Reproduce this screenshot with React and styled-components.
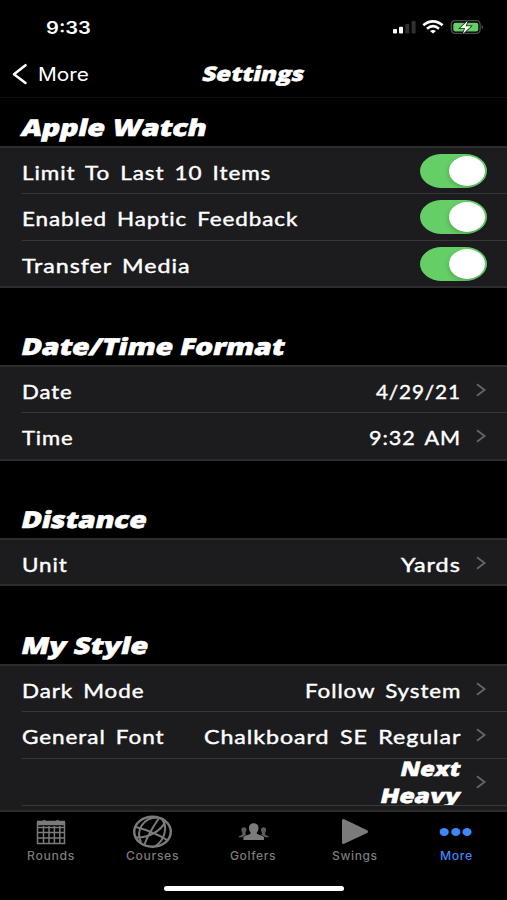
import React, { useLayoutEffect, useRef, useState } from "react";
import styled, { createGlobalStyle } from "styled-components";

const GlobalStyle = createGlobalStyle`
  * { box-sizing: border-box; }
  body { margin: 0; background: #000; }
`;

const Screen = styled.div`
  width: 507px;
  height: 900px;
  display: flex;
  flex-direction: column;
  overflow: hidden;
  background: #000;
  color: #fff;
  font-family: Inter, sans-serif;
`;

const fonts = {
  row: `font: 400 19.5px/24px Lato, sans-serif; letter-spacing: 0.8px; word-spacing: 3px; -webkit-text-stroke: 0.4px currentColor;`,
  heading: `font: 800 23px/28px "Open Sans", sans-serif; -webkit-text-stroke: 0.6px currentColor;`,
  heavy: `font: 800 20px/27px "Open Sans", sans-serif; -webkit-text-stroke: 0.5px currentColor;`,
  clock: `font: 600 17px/22px Inter, sans-serif; padding-top: 1px;`,
  back: `font: 400 18px/24px Inter, sans-serif; padding-top: 1px;`,
  tab: `font: 500 11.5px/14px Inter, sans-serif; letter-spacing: 0.6px;`,
};

const Box = styled.span`
  display: block;
  flex: none;
  width: ${(p) => p.$width}px;
  white-space: nowrap;
  ${(p) => fonts[p.$font]}
`;

const Glyphs = styled.span`
  display: inline-block;
  transform-origin: 0 50%;
`;

/* Text widened to fill a given width; slant leans the heavy display type. */
function WideText({ font, width, children }) {
  const ref = useRef(null);
  const [scale, setScale] = useState(1);
  const slanted = font === "heading" || font === "heavy";
  useLayoutEffect(() => {
    setScale((slanted ? width - 1 : width) / ref.current.offsetWidth);
  }, [width, children, slanted]);
  const transform = slanted ? `translateX(1px) skewX(-13deg) scaleX(${scale})` : `scaleX(${scale})`;
  return (
    <Box $font={font} $width={width}>
      <Glyphs ref={ref} style={{ transform }}>{children}</Glyphs>
    </Box>
  );
}

const StatusBar = styled.header`
  height: 54px;
  flex: none;
  display: flex;
  justify-content: space-between;
  align-items: flex-start;
  padding: 16px 22px 0 46px;
`;

const StatusIcons = styled.svg`
  display: block;
  width: 94px;
  height: 22px;
`;

const NavBar = styled.nav`
  height: 44px;
  flex: none;
  display: grid;
  grid-template-columns: 202px 103px 1fr;
  border-bottom: 1px solid #0d0d0d;
  padding-top: 6px;
`;

const Back = styled.div`
  display: flex;
  gap: 10px;
  padding: 2px 0 0 12px;
`;

const BackIcon = styled.svg`
  width: 16px;
  height: 22px;
  margin-top: 1px;
`;

const Content = styled.main`
  height: 714px;
  flex: none;
  overflow: hidden;
`;

const SectionTitle = styled.h2`
  height: ${(p) => p.$height}px;
  margin: 0;
  padding: 0 0 5px 21px;
  display: flex;
  align-items: flex-end;
`;

const Card = styled.section`
  background: #1c1c1e;
  border-top: 2px solid #2c2c2e;
  border-bottom: 2px solid #2c2c2e;
  height: ${(p) => p.$height}px;
`;

const Row = styled.div`
  height: 47px;
  margin-left: 22px;
  padding-right: 20px;
  display: flex;
  align-items: center;
  justify-content: space-between;
  &:first-child { height: 45px; }
  & + & { border-top: 1px solid #38383a; }
`;

const Value = styled.div`
  display: flex;
  align-items: center;
  gap: 15px;
  margin-left: auto;
`;

const Stack = styled.div`
  height: 50px;
  display: flex;
  flex-direction: column;
  align-items: flex-end;
  overflow: hidden;
  padding: 0 6px 0 6px;
  margin: -4px -6px 0 0;
`;

const LabelSlot = styled.div`
  padding-top: 4px;
`;

const ChevronIcon = styled.svg`
  width: 11px;
  height: 16px;
`;

const Switch = styled.div`
  width: 67px;
  height: 34px;
  border-radius: 22px / 17px;
  background: #65ce67;
  padding: 2px;
  display: flex;
  justify-content: flex-end;
`;

const Knob = styled.div`
  width: 36px;
  height: 30px;
  border-radius: 50%;
  background: #fff;
  box-shadow: -1px 2px 4px rgba(0, 0, 0, 0.16);
`;

const TabBar = styled.footer`
  height: 88px;
  flex: none;
  display: flex;
  flex-direction: column;
  align-items: center;
`;

const Tabs = styled.div`
  width: 507px;
  display: grid;
  grid-template-columns: repeat(5, 1fr);
  height: 74px;
`;

const Tab = styled.div`
  display: flex;
  flex-direction: column;
  align-items: center;
  color: ${(p) => (p.$active ? "#3f87f5" : "#7b7b7b")};
`;

const TabIcon = styled.svg`
  width: 44px;
  height: 36px;
  margin-top: 1px;
`;

const HomeIndicator = styled.div`
  width: 180px;
  height: 5px;
  border-radius: 3px;
  background: #fff;
  margin-left: 1px;
`;

const Chevron = () => (
  <ChevronIcon viewBox="0 0 11 16" fill="none" stroke="#646466" strokeWidth="1.9">
    <path d="M1 2.3 8.5 8 1 13.7" />
  </ChevronIcon>
);

const tabs = [
  {
    name: "Rounds", width: 48,
    icon: (
      <g fill="none" stroke="currentColor" strokeWidth="1.5">
        <path d="M8.5 10h27v20.5h-27z" />
        <path d="M8 10h28" strokeWidth="4.5" />
        <path d="M15.3 7v5M28.5 7v5" strokeWidth="2.2" />
        <path d="M9 14.5h27M9 19.5h27M9 25h27M14.5 13v17M20 13v17M25.4 13v17M30.8 13v17" />
      </g>
    ),
  },
  {
    name: "Courses", width: 53,
    icon: (
      <g fill="none" stroke="currentColor" strokeWidth="2.4">
        <ellipse cx="22.5" cy="18.7" rx="18.3" ry="15" />
        <path d="M27 4.5C13 5 5.5 17 11 29.5M31 5C38 12 36 26 25 33.5M29 5C25 11 18 21 14.5 31.5M6 14C17 17 29 22 38 27.5M6 24.5C18 25 31 18 35 9" strokeWidth="2" />
      </g>
    ),
  },
  {
    name: "Golfers", width: 46,
    icon: (
      <g fill="currentColor">
        <path d="M12.4 27v-2.6c0-1.7 6.1-2.6 7.1-3.6v-1.5c-1-1-1.6-2.6-1.6-4.4 0-2.8 1.9-4.6 4.8-4.6s4.8 1.8 4.8 4.6c0 1.8-.6 3.4-1.6 4.4v1.5c1 1 7.1 1.9 7.1 3.6V27z" />
        <path opacity=".75" d="M7.5 24.3c0-1.7 3.2-1.7 3.8-2.8v-1.8c-1.5-2.4-1.2-5.4 1.6-5.4 2.7 0 3.2 3 1.6 5.4v1.3l1 .8c-1.8.7-3.4 1.5-4 2.5z" />
        <path opacity=".75" d="M38 24.3c0-1.7-3.2-1.7-3.8-2.8v-1.8c1.5-2.4 1.2-5.4-1.6-5.4-2.7 0-3.2 3-1.6 5.4v1.3l-1 .8c1.8.7 3.4 1.5 4 2.5z" />
      </g>
    ),
  },
  {
    name: "Swings", width: 46,
    icon: <path d="M10.5 7.6v21.8L33.5 18.7z" fill="currentColor" stroke="currentColor" strokeWidth="3" strokeLinejoin="round" />,
  },
  {
    name: "More", width: 33, active: true,
    icon: (
      <g fill="currentColor">
        <ellipse cx="10.2" cy="19" rx="4.6" ry="4" />
        <ellipse cx="21.8" cy="19" rx="4.6" ry="4" />
        <ellipse cx="33" cy="19" rx="4.6" ry="4" />
      </g>
    ),
  },
];

function SettingRow({ label, labelWidth, value, valueWidth, toggle }) {
  return (
    <Row>
      <LabelSlot><WideText font="row" width={labelWidth}>{label}</WideText></LabelSlot>
      {toggle ? (
        <Switch role="switch" aria-checked="true"><Knob /></Switch>
      ) : (
        <Value>
          <LabelSlot><WideText font="row" width={valueWidth}>{value}</WideText></LabelSlot>
          <Chevron />
        </Value>
      )}
    </Row>
  );
}

export default function App() {
  return (
    <Screen>
      <GlobalStyle />
      <StatusBar>
        <WideText font="clock" width={45}>9:33</WideText>
        <StatusIcons viewBox="391 16 94 22">
          <g fill="#fff">
            <rect x="393" y="29" width="4" height="4.5" rx="1" />
            <rect x="399" y="26.7" width="4" height="6.8" rx="1" />
            <rect x="405.3" y="24" width="4" height="9.5" rx="1" fill="#303030" />
            <rect x="411.6" y="21" width="4" height="12.5" rx="1" fill="#303030" />
          </g>
          <g fill="none" stroke="#fff" strokeWidth="2.6">
            <path d="M423.3 25.3c5.8-5.2 13.5-5.2 19.3 0" />
            <path d="M427 28.7c3.8-3.2 8.2-3.2 12 0" />
            <path d="M430 30.9q3-1.7 6 0L433 33.6z" fill="#fff" stroke="none" />
          </g>
          <rect x="451.3" y="20.7" width="28.8" height="12.6" rx="3.8" fill="none" stroke="#4d514d" strokeWidth="1.3" />
          <rect x="453.3" y="22.7" width="25" height="8.7" rx="2" fill="#65ce67" />
          <path d="M481.6 25.3c2 .7 2 3 0 3.7z" fill="#555" />
          <path d="M467.7 20.8 460 28.2h5.1l-2.3 5.8 8.2-7.7h-5.2z" fill="#fff" stroke="#0b1a0b" strokeWidth="1.4" paintOrder="stroke" />
        </StatusIcons>
      </StatusBar>
      <NavBar>
        <Back>
          <BackIcon viewBox="0 0 16 22" fill="none" stroke="#fff" strokeWidth="2.6" strokeLinecap="round" strokeLinejoin="round">
            <path d="M13.5 2.2 2 11.2l11.5 8.8" />
          </BackIcon>
          <WideText font="back" width={51}>More</WideText>
        </Back>
        <WideText font="heavy" width={103}>Settings</WideText>
      </NavBar>
      <Content>
        <SectionTitle $height={48}><WideText font="heading" width={187}>Apple Watch</WideText></SectionTitle>
        <Card $height={142}>
          <SettingRow label="Limit To Last 10 Items" labelWidth={249} toggle />
          <SettingRow label="Enabled Haptic Feedback" labelWidth={276} toggle />
          <SettingRow label="Transfer Media" labelWidth={168} toggle />
        </Card>
        <SectionTitle $height={77}><WideText font="heading" width={264}>Date/Time Format</WideText></SectionTitle>
        <Card $height={96}>
          <SettingRow label="Date" labelWidth={51} value="4/29/21" valueWidth={85} />
          <SettingRow label="Time" labelWidth={52} value="9:32 AM" valueWidth={92} />
        </Card>
        <SectionTitle $height={77}><WideText font="heading" width={126}>Distance</WideText></SectionTitle>
        <Card $height={48}>
          <SettingRow label="Unit" labelWidth={46} value="Yards" valueWidth={60} />
        </Card>
        <SectionTitle $height={78}><WideText font="heading" width={128}>My Style</WideText></SectionTitle>
        <Card $height={148}>
          <SettingRow label="Dark Mode" labelWidth={123} value="Follow System" valueWidth={156} />
          <SettingRow label="General Font" labelWidth={142} value="Chalkboard SE Regular" valueWidth={257} />
          <Row>
            <Value>
              <Stack>
                <WideText font="heavy" width={61}>Next</WideText>
                <WideText font="heavy" width={81}>Heavy</WideText>
              </Stack>
              <Chevron />
            </Value>
          </Row>
          <Row />
        </Card>
      </Content>
      <TabBar>
        <Tabs>
          {tabs.map((t) => (
            <Tab key={t.name} $active={t.active}>
              <TabIcon viewBox="0 0 44 36">{t.icon}</TabIcon>
              <WideText font="tab" width={t.width}>{t.name}</WideText>
            </Tab>
          ))}
        </Tabs>
        <HomeIndicator />
      </TabBar>
    </Screen>
  );
}
